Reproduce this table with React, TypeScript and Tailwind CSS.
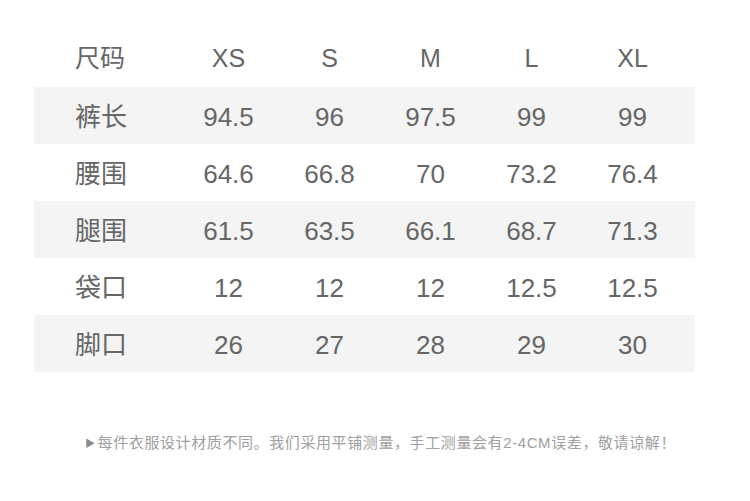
const sizes = ['XS', 'S', 'M', 'L', 'XL'];

const rows = [
  { label: '裤长', values: ['94.5', '96', '97.5', '99', '99'] },
  { label: '腰围', values: ['64.6', '66.8', '70', '73.2', '76.4'] },
  { label: '腿围', values: ['61.5', '63.5', '66.1', '68.7', '71.3'] },
  { label: '袋口', values: ['12', '12', '12', '12.5', '12.5'] },
  { label: '脚口', values: ['26', '27', '28', '29', '30'] },
];

export default function App() {
  return (
    <div
      className="w-[750px] h-[501px] bg-white text-[#666]"
      style={{ fontFamily: '"Liberation Sans", "Noto Sans CJK SC", sans-serif' }}
    >
      <div className="pt-[30px] px-[34px] w-[729px]">
        {/* header row */}
        <div className="flex items-center h-[57px] text-[25px]">
          <div className="w-[144px] pl-[41px]">尺码</div>
          {sizes.map((s) => (
            <div key={s} className="w-[101px] text-center">{s}</div>
          ))}
        </div>

        {rows.map((row, i) => (
          <div
            key={row.label}
            className={`flex items-center h-[57px] pt-[3px] text-[26px] ${i % 2 === 0 ? 'bg-[#f4f4f4]' : 'bg-white'}`}
          >
            <div className="w-[144px] pl-[41px]">{row.label}</div>
            {row.values.map((v, j) => (
              <div key={j} className="w-[101px] text-center">{v}</div>
            ))}
          </div>
        ))}
      </div>

      {/* note */}
      <div className="mt-[60px] flex items-center pl-[85px] text-[15px] tracking-[0.6px] text-[#a0a0a0]">
        <span className="text-[10px] text-[#8a8a8a] mr-[2px]">▶</span>
        <span>每件衣服设计材质不同。我们采用平铺测量，手工测量会有2-4CM误差，敬请谅解！</span>
      </div>
    </div>
  );
}
